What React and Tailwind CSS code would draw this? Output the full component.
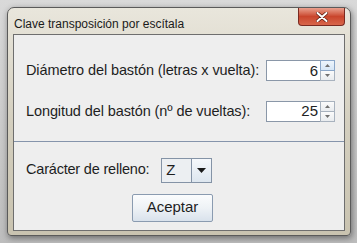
const Spinner = ({ value, active }) => (
  <div className="flex h-[21px] shrink-0">
    <div className="w-[54px] h-full bg-white border border-[#8a97a8] border-r-0 flex items-center justify-end pr-[2px] text-[15px] text-[#222]">
      {value}
    </div>
    <div className="w-[15px] h-full flex flex-col">
      <div className={`h-[11px] flex items-center justify-center border ${active ? 'border-[#8aa6c8] bg-gradient-to-b from-[#eef5fc] to-[#d6e6f6]' : 'border-[#a8b2be] bg-gradient-to-b from-[#fbfbfb] to-[#e9ecef]'}`}>
        <svg width="5" height="3" viewBox="0 0 5 3"><path d="M0 3 L2.5 0 L5 3 Z" fill="#707070" /></svg>
      </div>
      <div className="h-[10px] flex items-center justify-center border border-t-0 border-[#a8b2be] bg-gradient-to-b from-[#fbfbfb] to-[#e9ecef]">
        <svg width="5" height="3" viewBox="0 0 5 3"><path d="M0 0 L5 0 L2.5 3 Z" fill="#707070" /></svg>
      </div>
    </div>
  </div>
)

export default function App() {
  return (
    <div
      className="w-[357px] h-[243px] bg-gradient-to-b from-[#d9d9d9] to-[#bdbdbd] pt-[7px] pl-[7px] overflow-hidden"
      style={{ fontFamily: '"Liberation Sans", Arial, sans-serif' }}
    >
      {/* Window frame */}
      <div className="w-[344px] h-[229px] rounded-t-[7px] rounded-b-[4px] border border-[#5a5a5a] bg-gradient-to-b from-[#e9e6dc] via-[#d4cfbf] to-[#c9c3b0] shadow-[1px_2px_6px_rgba(0,0,0,0.45)] flex flex-col">
        {/* Title bar */}
        <div className="h-[26px] flex items-start shrink-0">
          <div className="pl-[6px] pt-[7px] text-[12px] text-[#1a1a1a] flex-1 whitespace-nowrap">Clave transposición por escítala</div>
          <div className="mr-[5px] w-[47px] h-[18px] rounded-b-[4px] border border-t-0 border-[#7a2a20] bg-gradient-to-b from-[#e9a08e] via-[#c9452c] to-[#d8664a] flex items-center justify-center">
            <svg width="12" height="10" viewBox="0 0 12 10">
              <path d="M1.5 1 L10.5 9 M10.5 1 L1.5 9" stroke="#5a1a10" strokeWidth="3.4" strokeLinecap="round" />
              <path d="M1.5 1 L10.5 9 M10.5 1 L1.5 9" stroke="#ffffff" strokeWidth="2" strokeLinecap="round" />
            </svg>
          </div>
        </div>

        {/* Client area */}
        <div className="mx-[5px] h-[197px] shrink-0 border border-[#6e6e6e] bg-[#eeeeee] flex flex-col text-[14.5px] text-[#1e1e1e] whitespace-nowrap">
          <div className="pt-[25px] pl-[12px] pr-[9px] flex flex-col gap-[19px]">
            <div className="flex items-center justify-between">
              <span className="tracking-[-0.1px]">Diámetro del bastón (letras x vuelta):</span>
              <Spinner value="6" active />
            </div>
            <div className="flex items-center justify-between">
              <span className="tracking-[-0.1px]">Longitud del bastón (nº de vueltas):</span>
              <Spinner value="25" />
            </div>
          </div>

          <div className="mt-[18px] h-px bg-[#8594ab]" />

          <div className="pt-[16px] pl-[12px] flex items-center">
            <span className="tracking-[-0.2px]">Carácter de relleno:</span>
            <div className="ml-[12px] flex h-[25px] border border-[#8493a6]">
              <div className="w-[30px] bg-[#eceff2] flex items-center pl-[4px] text-[15px] border-r border-[#8493a6]">Z</div>
              <div className="w-[19px] bg-gradient-to-b from-[#f5f8fb] to-[#dde6ef] flex items-center justify-center">
                <svg width="9" height="5" viewBox="0 0 9 5"><path d="M0 0 L9 0 L4.5 5 Z" fill="#1a1a1a" /></svg>
              </div>
            </div>
          </div>

          <div className="pt-[11px] pl-[118px]">
            <div className="w-[81px] h-[28px] rounded-[2px] border border-[#8a9bb0] bg-gradient-to-b from-[#fbfcfd] via-[#eef2f6] to-[#d9e2ec] flex items-center justify-center text-[15px]">
              Aceptar
            </div>
          </div>
        </div>
      </div>
    </div>
  )
}
